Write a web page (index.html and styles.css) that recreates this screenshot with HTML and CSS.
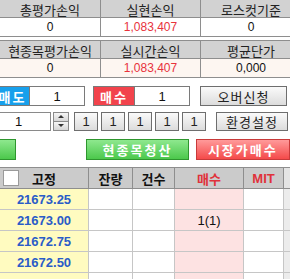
FILE: index.html
```html
<!DOCTYPE html>
<html lang="ko">
<head>
<meta charset="utf-8">
<link rel="stylesheet" href="styles.css">
</head>
<body>
<div class="page">
  <div class="sum">
    <div class="h">총평가손익</div><div class="h">실현손익</div><div class="h">로스컷기준</div>
    <div class="v">0</div><div class="v red">1,083,407</div><div class="v">0</div>
  </div>
  <div class="sum sum2">
    <div class="h">현종목평가손익</div><div class="h">실시간손익</div><div class="h">평균단가</div>
    <div class="v">0</div><div class="v red">1,083,407</div><div class="v">0,000</div>
  </div>

  <div class="row r3">
    <div class="qty q-sell"><span class="tag sell">매도</span><span class="in">1</span></div>
    <div class="qty q-buy"><span class="tag buy">매수</span><span class="in">1</span></div>
    <div class="btn over">오버신청</div>
  </div>

  <div class="row r4">
    <div class="num">1</div>
    <div class="spin"><span class="up"></span><span class="dn"></span></div>
    <div class="mini">
      <div class="btn sm">1</div><div class="btn sm">1</div><div class="btn sm">1</div><div class="btn sm">1</div><div class="btn sm">1</div>
    </div>
    <div class="btn env">환경설정</div>
  </div>

  <div class="row r5">
    <div class="big green g1"></div>
    <div class="big green g2">현종목청산</div>
    <div class="big redb">시장가매수</div>
  </div>

  <div class="grid">
    <div class="gh c1"><span class="chk"></span><span>고정</span></div>
    <div class="gh">잔량</div>
    <div class="gh">건수</div>
    <div class="gh hred">매수</div>
    <div class="gh hred mit">MIT</div>
    <div class="gh sb"></div>

    <div class="gc price">21673.25</div><div class="gc"></div><div class="gc"></div><div class="gc pink"></div><div class="gc"></div><div class="gc sb"></div>
    <div class="gc price">21673.00</div><div class="gc"></div><div class="gc"></div><div class="gc pink">1(1)</div><div class="gc"></div><div class="gc sb"></div>
    <div class="gc price">21672.75</div><div class="gc"></div><div class="gc"></div><div class="gc pink"></div><div class="gc"></div><div class="gc sb"></div>
    <div class="gc price">21672.50</div><div class="gc"></div><div class="gc"></div><div class="gc pink"></div><div class="gc"></div><div class="gc sb"></div>
    <div class="gc price"></div><div class="gc"></div><div class="gc"></div><div class="gc pink"></div><div class="gc"></div><div class="gc sb"></div>
  </div>
</div>
</body>
</html>
```

FILE: styles.css
```css
* { box-sizing: border-box; }
html, body { margin: 0; padding: 0; background: #ffffff; }
body {
  width: 290px;
  height: 279px;
  overflow: hidden;
  font-family: "Noto Sans CJK KR", "Liberation Sans", sans-serif;
  font-size: 12px;
  color: #111;
}
.page { width: 290px; height: 279px; overflow: hidden; }

.sum {
  display: grid;
  grid-template-columns: 100px 99px 100px;
  grid-template-rows: 17px 18px;
  gap: 1px;
  background: #8e8e8e;
  padding: 0 0 1px 0;
  width: 301px;
}
.sum2 { margin-top: 3px; padding-top: 1px; }
.sum .h {
  background: #d2d2d2;
  display: flex; align-items: center; justify-content: center;
  font-size: 13px; line-height: 1; color: #222;
  padding-top: 1px;
}
.sum .v {
  background: #fff;
  display: flex; align-items: center; justify-content: center;
  font-family: "Liberation Sans", sans-serif;
  font-size: 12px; line-height: 1;
}
.sum2 .v { background: #fdf6f1; }
.sum .red { color: #e8323c; }

.row { display: flex; align-items: stretch; }
.r3 { margin-top: 8px; height: 20px; margin-left: -5px; }
.qty {
  display: flex;
  border: 1px solid #7a7a7a;
}
.q-sell { width: 90px; }
.q-buy { width: 97px; margin-left: 8px; }
.tag {
  display: flex; align-items: center; justify-content: center;
  color: #fff; font-weight: bold; font-size: 13px; letter-spacing: 2px;
  line-height: 1;
}
.sell { width: 34px; background: #17a0ec; border-right: 1px solid #7a7a7a; }
.buy { width: 41px; background: #f2434c; border-right: 1px solid #7a7a7a; }
.in {
  flex: 1; background: #fff;
  display: flex; align-items: center; justify-content: center;
  font-family: "Liberation Sans", sans-serif; font-size: 13px;
}

.btn {
  border: 1px solid #6e6e6e;
  background: linear-gradient(#fafafa, #dcdcdc);
  display: flex; align-items: center; justify-content: center;
  line-height: 1; color: #222;
}
.over { width: 87px; margin-left: 10px; font-size: 13px; letter-spacing: 1px; }

.r4 { margin-top: 6px; height: 19px; margin-left: -14px; }
.num {
  width: 65px; border: 1px solid #8a8a8a; background: #fff;
  display: flex; align-items: center; justify-content: center;
  font-family: "Liberation Sans", sans-serif; font-size: 13px;
}
.spin {
  width: 16px; margin-left: 2px;
  display: flex; flex-direction: column; gap: 1px;
  border: 1px solid #8a8a8a; background: #8a8a8a;
}
.spin span {
  flex: 1; background: linear-gradient(#f6f6f6, #d6d6d6);
  position: relative;
}
.spin .up::after, .spin .dn::after {
  content: ""; position: absolute; left: 4px; width: 0; height: 0;
  border-left: 3px solid transparent; border-right: 3px solid transparent;
}
.spin .up::after { top: 2px; border-bottom: 3px solid #333; }
.spin .dn::after { top: 2px; border-top: 3px solid #333; }
.mini { display: flex; gap: 3px; margin-left: 5px; }
.sm {
  width: 24px; font-family: "Liberation Sans", sans-serif; font-size: 13px;
}
.env { width: 72px; margin-left: 10px; font-size: 13px; letter-spacing: 1px; }

.r5 { margin-top: 8px; height: 21px; margin-left: -20px; }
.big {
  display: flex; align-items: center; justify-content: center;
  color: #fff; font-weight: bold; font-size: 13px; letter-spacing: 2px; line-height: 1;
}
.green {
  background: linear-gradient(#8ee88e, #4cc84c);
  border: 1px solid #2e962e;
}
.g1 { width: 37px; }
.g2 { width: 104px; margin-left: 70px; }
.redb {
  width: 96px; margin-left: 7px;
  background: linear-gradient(#ff9a9a, #f44a4a);
  border: 1px solid #c83a3a;
}

.grid {
  margin-top: 7px;
  display: grid;
  grid-template-columns: 88px 43px 41px 68px 39px 10px;
  grid-template-rows: 20px repeat(5, 20px);
  column-gap: 1px; row-gap: 1px;
  background: #c6c6c6;
  border-top: 1px solid #8e8e8e;
  width: 296px;
}
.gh {
  background: #cbcbcb;
  display: flex; align-items: center; justify-content: center;
  font-weight: bold; font-size: 13px; line-height: 1; color: #111;
  border-bottom: 1px solid #8e8e8e;
  margin-bottom: -1px;
  box-shadow: 1px 0 0 #8e8e8e;
}
.gh.c1 { justify-content: flex-start; padding-left: 3px; gap: 13px; }
.chk {
  width: 16px; height: 16px; background: #fff;
  border: 1px solid #9a9a9a; display: inline-block;
}
.hred { color: #e0323a; }
.mit { font-family: "Liberation Sans", sans-serif; font-size: 13px; }
.gc {
  background: #fff;
  display: flex; align-items: center; justify-content: center;
  font-family: "Liberation Sans", sans-serif; font-size: 13px; line-height: 1;
}
.price {
  background: #fffbc0; color: #2a5cc8; font-weight: bold;
  font-family: "Liberation Sans", sans-serif; font-size: 13px;
}
.pink { background: #fde2e2; }
.sb { background: #ececec; }
.gh.sb { background: #e4e4e4; box-shadow: none; }
```
